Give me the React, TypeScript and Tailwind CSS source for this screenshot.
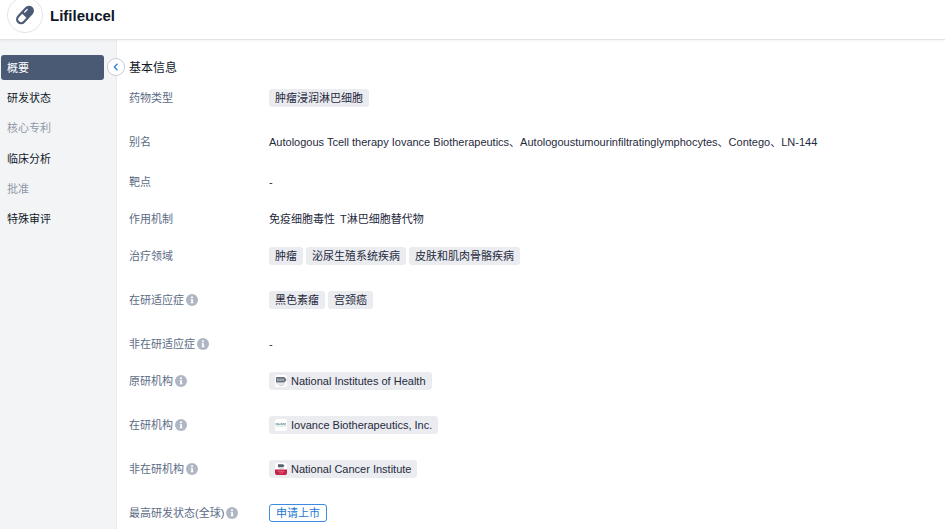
import type { ReactNode } from "react";

const navItems = [
  { label: "概要", state: "active" },
  { label: "研发状态", state: "normal" },
  { label: "核心专利", state: "disabled" },
  { label: "临床分析", state: "normal" },
  { label: "批准", state: "disabled" },
  { label: "特殊审评", state: "normal" },
];

const navStyles: Record<string, string> = {
  active: "bg-[#4a5a75] text-white",
  normal: "text-[#101828]",
  disabled: "text-[#8f99a8]",
};

function PillIcon() {
  return (
    <svg viewBox="0 0 24 24" className="size-6" aria-hidden="true">
      <g transform="rotate(-47 12 12)">
        <rect x="1.2" y="7" width="21.6" height="10" rx="5" fill="#4a5a75" />
        <path d="M11 9.2V14.8H6.2a2.8 2.8 0 0 1 0-5.6Z" fill="#fff" />
        <path d="M14 9.8H17.6" stroke="#fff" strokeWidth="1.3" strokeLinecap="round" />
      </g>
    </svg>
  );
}

function InfoIcon() {
  return (
    <svg viewBox="0 0 12 12" className="size-3 shrink-0" aria-hidden="true">
      <circle cx="6" cy="6" r="6" fill="#b0b7c4" />
      <rect x="5" y="2.5" width="2" height="1.6" fill="#fff" />
      <path d="M4.6 5.2H7V8.4H7.6V9.3H4.6V8.4H5.2V6.1H4.6Z" fill="#fff" />
    </svg>
  );
}

function NihLogo() {
  return (
    <svg viewBox="0 0 12 12" className="size-3 shrink-0" aria-hidden="true">
      <rect width="12" height="12" rx="2" fill="#fff" />
      <path d="M1 2H9.4L11.6 4.8L9.4 7.6H1Z" fill="#66717f" />
      <path d="M2.5 3.6V6M2.5 3.6L4.2 6V3.6M5.5 3.6V6M6.8 3.6V6M8.4 3.6V6M6.8 4.8H8.4" stroke="#dfe3e8" strokeWidth="0.5" fill="none" />
      <path d="M1.5 9H10.5M4 10.5H8.5" stroke="#b0b4ba" strokeWidth="0.6" />
    </svg>
  );
}

function IovanceLogo() {
  return (
    <svg viewBox="0 0 12 12" className="size-3 shrink-0" aria-hidden="true">
      <rect width="12" height="12" rx="2" fill="#fff" />
      <path d="M1 4V6M2 4.5H3.3V6H2ZM4 4.5L4.7 6L5.4 4.5M6 4.5H7.2V6H6ZM8 6V4.5H9V6M11 4.5H9.8V6H11" stroke="#6c9c9d" strokeWidth="0.7" fill="none" />
      <path d="M1 7.3H11" stroke="#c5e6cd" strokeWidth="0.7" />
    </svg>
  );
}

function NciLogo() {
  return (
    <svg viewBox="0 0 12 12" className="size-3 shrink-0" aria-hidden="true">
      <rect width="12" height="12" rx="2" fill="#fff" />
      <path d="M3 1.3H8L9.6 2.8L8 4.3H3Z" fill="#59616c" />
      <path d="M3.5 5.3H9" stroke="#a6a9ae" strokeWidth="0.5" />
      <path d="M0 6.5H12V10a2 2 0 0 1-2 2H2a2 2 0 0 1-2-2Z" fill="#c41f45" />
      <path d="M2.5 8.3H9.5M4 10H8.5" stroke="#e592a5" strokeWidth="0.6" />
    </svg>
  );
}

function Tag({ icon, children }: { icon?: ReactNode; children: ReactNode }) {
  return (
    <span className="flex h-[18px] items-center gap-1 rounded-[3px] bg-[#ebecf0] px-1.5 whitespace-nowrap">
      {icon}
      {children}
    </span>
  );
}

const rowHeights = { tag: "h-11", long: "h-10", text: "h-[37px]" };

function Row({
  label,
  info,
  size = "tag",
  children,
}: {
  label: string;
  info?: boolean;
  size?: keyof typeof rowHeights;
  children: ReactNode;
}) {
  return (
    <div className={"flex items-start " + rowHeights[size]}>
      <dt className="flex h-[18px] w-[140px] shrink-0 items-center gap-0.5 whitespace-nowrap text-[#5b6b85]">
        {label}
        {info && <InfoIcon />}
      </dt>
      <dd className="flex min-h-[18px] items-center gap-[3px] text-[#1f2a3d]">{children}</dd>
    </div>
  );
}

export default function App() {
  return (
    <div className="flex h-screen flex-col overflow-hidden bg-white font-['Liberation_Sans','Noto_Sans_CJK_SC',sans-serif] text-[11px] leading-[18px]">
      <header className="z-10 flex h-10 shrink-0 items-end gap-[7px] border-b border-[#e1e3e6] pb-1.5 pl-[7px] shadow-xs">
        <div className="flex size-9 shrink-0 items-center justify-center rounded-full border border-[#e3e4e7]">
          <PillIcon />
        </div>
        <h1 className="pb-[7px] text-[15px] leading-5 font-bold text-[#101828]">Lifileucel</h1>
      </header>
      <div className="flex min-h-0 flex-1">
        <aside className="relative w-[117px] shrink-0 border-r border-[#e9ebee] bg-[#f3f4f6] pt-[15px] pr-3 pl-px">
          <nav aria-label="章节">
            <ul className="flex h-[177px] flex-col justify-between">
              {navItems.map((item) => (
                <li key={item.label}>
                  <button
                    type="button"
                    disabled={item.state === "disabled"}
                    className={"flex h-[25px] w-full items-center rounded-[3px] px-1.5 " + navStyles[item.state]}
                  >
                    {item.label}
                  </button>
                </li>
              ))}
            </ul>
          </nav>
          <button
            type="button"
            aria-label="收起"
            className="absolute top-[18px] -right-[9px] flex size-[18px] items-center justify-center rounded-full border border-[#c9cdd6] bg-white"
          >
            <svg viewBox="0 0 8 8" className="size-2" aria-hidden="true">
              <path d="M5.5 0.8L2.3 4L5.5 7.2" stroke="#2f80d8" strokeWidth="1.3" fill="none" />
            </svg>
          </button>
        </aside>
        <main className="min-w-0 flex-1 overflow-hidden pt-[19px] pl-3">
          <h2 className="text-xs leading-[18px] text-[#101828]">基本信息</h2>
          <dl className="mt-3">
            <Row label="药物类型">
              <Tag>肿瘤浸润淋巴细胞</Tag>
            </Row>
            <Row label="别名" size="long">
              Autologous Tcell therapy Iovance Biotherapeutics、Autologoustumourinfiltratinglymphocytes、Contego、LN-144
            </Row>
            <Row label="靶点" size="text">-</Row>
            <Row label="作用机制" size="text">
              <span>免疫细胞毒性</span>
              <span className="ml-0.5">T淋巴细胞替代物</span>
            </Row>
            <Row label="治疗领域">
              <Tag>肿瘤</Tag>
              <Tag>泌尿生殖系统疾病</Tag>
              <Tag>皮肤和肌肉骨骼疾病</Tag>
            </Row>
            <Row label="在研适应症" info>
              <Tag>黑色素瘤</Tag>
              <Tag>宫颈癌</Tag>
            </Row>
            <Row label="非在研适应症" info size="text">-</Row>
            <Row label="原研机构" info>
              <Tag icon={<NihLogo />}>National Institutes of Health</Tag>
            </Row>
            <Row label="在研机构" info>
              <Tag icon={<IovanceLogo />}>Iovance Biotherapeutics, Inc.</Tag>
            </Row>
            <Row label="非在研机构" info>
              <Tag icon={<NciLogo />}>National Cancer Institute</Tag>
            </Row>
            <Row label="最高研发状态(全球)" info>
              <span className="flex h-[18px] items-center rounded-[3px] border border-[#3d8be0] px-1.5 whitespace-nowrap text-[#2478d4]">
                申请上市
              </span>
            </Row>
          </dl>
        </main>
      </div>
    </div>
  );
}
